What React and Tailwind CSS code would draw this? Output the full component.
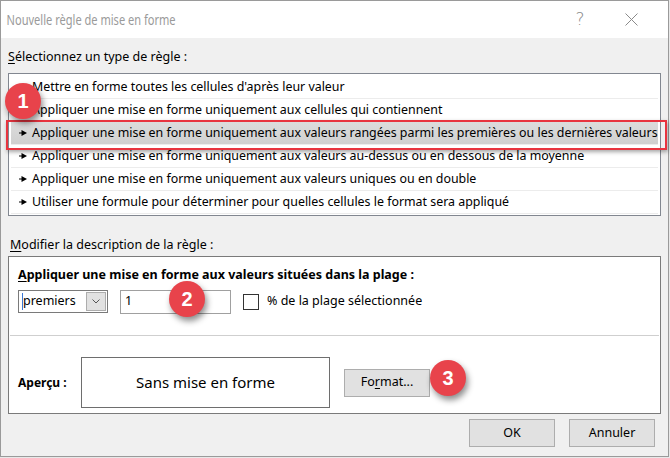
import React from "react";

const F = { fontFamily: '"Noto Sans", "Open Sans", sans-serif' };

function Arrow() {
  return (
    <svg width="8" height="6" viewBox="0 0 8 6" className="shrink-0">
      <rect x="0" y="2.5" width="3" height="1" fill="#000" />
      <polygon points="2.5,0 8,3 2.5,6" fill="#000" />
    </svg>
  );
}

function Badge({ n, className }) {
  return (
    <div
      className={
        "absolute w-[36px] h-[36px] rounded-full bg-[#e8434b] text-white font-bold text-[20px] flex items-center justify-center shadow-[2px_4px_6px_rgba(0,0,0,0.45)] " +
        className
      }
      style={{ fontFamily: '"Liberation Sans", Arial, sans-serif' }}
    >
      {n}
    </div>
  );
}

const rows = [
  "Mettre en forme toutes les cellules d'après leur valeur",
  "Appliquer une mise en forme uniquement aux cellules qui contiennent",
  "Appliquer une mise en forme uniquement aux valeurs rangées parmi les premières ou les dernières valeurs",
  "Appliquer une mise en forme uniquement aux valeurs au-dessus ou en dessous de la moyenne",
  "Appliquer une mise en forme uniquement aux valeurs uniques ou en double",
  "Utiliser une formule pour déterminer pour quelles cellules le format sera appliqué",
];

export default function App() {
  return (
    <div className="w-[670px] h-[458px] bg-[#e8e8e8] relative overflow-hidden" style={F}>
      <div className="w-[669px] h-[457px] border border-[#9a9a9a] bg-[#f0f0f0] flex flex-col relative text-[12.5px] text-black">
        {/* title bar */}
        <div className="h-[37px] bg-white flex items-center shrink-0">
          <div className="pl-[7px] text-[14px] text-[#9a9a9a] origin-left scale-x-[0.79] whitespace-nowrap">Nouvelle règle de mise en forme</div>
          <div className="ml-auto w-[20px] text-center text-[#8a8a8a] text-[17px] mr-[35px]" style={{ fontFamily: '"DejaVu Sans", sans-serif', fontWeight: 200 }}>?</div>
          <svg width="13" height="13" viewBox="0 0 13 13" className="mr-[30px]">
            <path d="M0.5 0.5L12.5 12.5M12.5 0.5L0.5 12.5" stroke="#8a8a8a" strokeWidth="1" />
          </svg>
        </div>

        <div className="px-[7px] flex flex-col">
          <div className="mt-[11px] leading-[16px]">
            <span className="underline underline-offset-2">S</span>électionnez un type de règle :
          </div>
          <div className="mt-[8px] h-[143px] border border-[#828790] bg-white pt-[2px] px-[2px] flex flex-col text-[12.4px]">
            {rows.map((r, i) => (
              <div
                key={i}
                className={
                  "h-[23px] flex items-center gap-[5px] pl-[8px] border-b border-[#ececec] whitespace-nowrap overflow-visible " +
                  (i === 2 ? "bg-[linear-gradient(#dcdcdc,#d0d0d0)]" : "")
                }
              >
                <Arrow />
                <span>{r}</span>
              </div>
            ))}
          </div>

          <div className="mt-[21px] leading-[16px] pl-[2px]">
            <span className="underline underline-offset-2">M</span>odifier la description de la règle :
          </div>
          <div className="mt-[3px] h-[158px] border border-[#7a7a7a] bg-white flex flex-col">
            <div className="pt-[10px] pl-[9px] leading-[16px] font-bold text-[12.5px]">
              <span className="underline underline-offset-2">A</span>ppliquer une mise en forme aux valeurs situées dans la plage :
            </div>
            <div className="mt-[6px] pl-[9px] flex items-center h-[25px]">
              <div className="w-[90px] h-[23px] border border-[#7a7a7a] flex items-center relative">
                <div className="absolute left-[3px] top-[2px] w-[1px] h-[17px] bg-[#3a78d6]"></div>
                <span className="pl-[4px]">premiers</span>
                <div className="ml-auto mr-[1px] w-[20px] h-[19px] bg-[#e1e1e1] border border-[#adadad] flex items-center justify-center">
                  <svg width="8" height="5" viewBox="0 0 8 5">
                    <path d="M0.5 0.5L4 4L7.5 0.5" stroke="#555" fill="none" strokeWidth="1" />
                  </svg>
                </div>
              </div>
              <div className="ml-[12px] w-[111px] h-[24px] border border-[#a0a0a0] flex items-center pl-[4px]">1</div>
              <div className="ml-[12px] w-[16px] h-[16px] border border-[#333]"></div>
              <div className="ml-[8px]">% de la plage sélectionnée</div>
            </div>
            <div className="mt-[21px] mx-[1px] h-[1px] bg-[#cfcfcf]"></div>
            <div className="mt-[21px] pl-[9px] flex items-center">
              <div className="w-[63px] font-bold text-[12px]">Aperçu :</div>
              <div className="w-[249px] h-[51px] border border-[#6e6e6e] flex items-center justify-center text-[15px]">
                Sans mise en forme
              </div>
              <div className="ml-[14px] w-[86px] h-[28px] bg-[#e1e1e1] border border-[#adadad] flex items-center justify-center">
                Fo<span className="underline underline-offset-2">r</span>mat...
              </div>
            </div>
          </div>
          <div className="mt-[5px] flex justify-end gap-[14px] pr-[6px]">
            <div className="w-[86px] h-[28px] bg-[#e1e1e1] border border-[#adadad] flex items-center justify-center">OK</div>
            <div className="w-[86px] h-[28px] bg-[#e1e1e1] border border-[#adadad] flex items-center justify-center">Annuler</div>
          </div>
        </div>

        {/* red highlight */}
        <div className="absolute left-[5px] top-[119px] w-[661px] h-[30px] border-2 border-[#e8343f] shadow-[1px_2px_4px_rgba(0,0,0,0.35)]"></div>

        <Badge n="1" className="left-[4px] top-[82px]" />
        <Badge n="2" className="left-[168px] top-[280px]" />
        <Badge n="3" className="left-[429px] top-[359px]" />
      </div>
    </div>
  );
}
